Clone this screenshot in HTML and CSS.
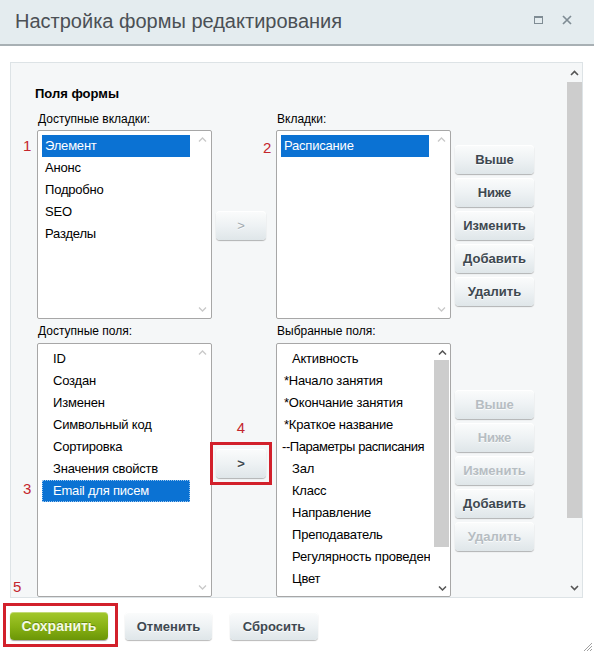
FILE: index.html
```html
<!DOCTYPE html>
<html lang="ru">
<head>
<meta charset="utf-8">
<title>Настройка формы редактирования</title>
<link rel="stylesheet" href="styles.css">
</head>
<body>
<div class="dialog">
  <div class="header">
    <h1 class="title">Настройка формы редактирования</h1>
    <div class="hicons">
      <span class="ic-max"></span>
      <svg class="ic-close" width="10" height="10" viewBox="0 0 10 10"><path d="M1 1L9 9M9 1L1 9" stroke="#7f8c94" stroke-width="1.7" fill="none"/></svg>
    </div>
  </div>

  <div class="panel">
    <div class="content">
      <div class="section-title">Поля формы</div>
      <div class="grid">
        <div class="lbl lbl-first">Доступные вкладки:</div>
        <div></div>
        <div class="lbl lbl-first">Вкладки:</div>
        <div></div>

        <div class="listbox lb-short">
          <span class="num num-1">1</span>
          <div class="items">
            <div class="item sel">Элемент</div>
            <div class="item">Анонс</div>
            <div class="item">Подробно</div>
            <div class="item">SEO</div>
            <div class="item">Разделы</div>
          </div>
          <div class="sb">
            <div class="sb-btn"><svg width="9" height="5" viewBox="0 0 9 5"><path d="M1 4.5L4.5 1L8 4.5" stroke="#c9c9c9" stroke-width="1.3" fill="none"/></svg></div>
            <div class="sb-track"></div>
            <div class="sb-btn"><svg width="9" height="5" viewBox="0 0 9 5"><path d="M1 0.5L4.5 4L8 0.5" stroke="#c9c9c9" stroke-width="1.3" fill="none"/></svg></div>
          </div>
        </div>

        <div class="mid mid-1">
          <button class="btn btn-arrow disabled">&gt;</button>
        </div>

        <div class="listbox lb-short">
          <span class="num num-2">2</span>
          <div class="items">
            <div class="item sel">Расписание</div>
          </div>
          <div class="sb">
            <div class="sb-btn"><svg width="9" height="5" viewBox="0 0 9 5"><path d="M1 4.5L4.5 1L8 4.5" stroke="#c9c9c9" stroke-width="1.3" fill="none"/></svg></div>
            <div class="sb-track"></div>
            <div class="sb-btn"><svg width="9" height="5" viewBox="0 0 9 5"><path d="M1 0.5L4.5 4L8 0.5" stroke="#c9c9c9" stroke-width="1.3" fill="none"/></svg></div>
          </div>
        </div>

        <div class="side side-1">
          <button class="btn btn-side">Выше</button>
          <button class="btn btn-side">Ниже</button>
          <button class="btn btn-side">Изменить</button>
          <button class="btn btn-side">Добавить</button>
          <button class="btn btn-side">Удалить</button>
        </div>

        <div class="lbl">Доступные поля:</div>
        <div></div>
        <div class="lbl">Выбранные поля:</div>
        <div></div>

        <div class="listbox lb-tall">
          <span class="num num-3">3</span>
          <span class="num num-5">5</span>
          <div class="items">
            <div class="item ind">ID</div>
            <div class="item ind">Создан</div>
            <div class="item ind">Изменен</div>
            <div class="item ind">Символьный код</div>
            <div class="item ind">Сортировка</div>
            <div class="item ind">Значения свойств</div>
            <div class="item ind sel focus">Email для писем</div>
          </div>
          <div class="sb">
            <div class="sb-btn"><svg width="9" height="5" viewBox="0 0 9 5"><path d="M1 4.5L4.5 1L8 4.5" stroke="#c9c9c9" stroke-width="1.3" fill="none"/></svg></div>
            <div class="sb-track"></div>
            <div class="sb-btn"><svg width="9" height="5" viewBox="0 0 9 5"><path d="M1 0.5L4.5 4L8 0.5" stroke="#c9c9c9" stroke-width="1.3" fill="none"/></svg></div>
          </div>
        </div>

        <div class="mid mid-2">
          <div class="num-4">4</div>
          <div class="marked marked-arrow">
            <button class="btn btn-arrow">&gt;</button>
          </div>
        </div>

        <div class="listbox lb-tall">
          <div class="items">
            <div class="item ind">Активность</div>
            <div class="item">*Начало занятия</div>
            <div class="item">*Окончание занятия</div>
            <div class="item">*Краткое название</div>
            <div class="item tight">--Параметры расписания</div>
            <div class="item ind">Зал</div>
            <div class="item ind">Класс</div>
            <div class="item ind">Направление</div>
            <div class="item ind">Преподаватель</div>
            <div class="item ind">Регулярность проведения</div>
            <div class="item ind">Цвет</div>
            <div class="item ind">Тип занятия</div>
          </div>
          <div class="sb sb-active">
            <div class="sb-btn"><svg width="9" height="5" viewBox="0 0 9 5"><path d="M1 4.5L4.5 1L8 4.5" stroke="#555" stroke-width="1.5" fill="none"/></svg></div>
            <div class="sb-track"><div class="sb-thumb thumb-list"></div></div>
            <div class="sb-btn"><svg width="9" height="5" viewBox="0 0 9 5"><path d="M1 0.5L4.5 4L8 0.5" stroke="#555" stroke-width="1.5" fill="none"/></svg></div>
          </div>
        </div>

        <div class="side side-2">
          <button class="btn btn-side disabled">Выше</button>
          <button class="btn btn-side disabled">Ниже</button>
          <button class="btn btn-side disabled">Изменить</button>
          <button class="btn btn-side">Добавить</button>
          <button class="btn btn-side disabled">Удалить</button>
        </div>
      </div>
    </div>

    <div class="vscroll">
      <div class="vs-btn"><svg width="9" height="6" viewBox="0 0 9 6"><path d="M1 5L4.5 1.5L8 5" stroke="#555" stroke-width="1.6" fill="none"/></svg></div>
      <div class="vs-track"><div class="sb-thumb thumb-page"></div></div>
      <div class="vs-btn"><svg width="9" height="6" viewBox="0 0 9 6"><path d="M1 1L4.5 4.5L8 1" stroke="#555" stroke-width="1.6" fill="none"/></svg></div>
    </div>
  </div>

  <div class="footer">
    <div class="marked marked-save">
      <button class="btn btn-save">Сохранить</button>
    </div>
    <button class="btn btn-foot btn-cancel">Отменить</button>
    <button class="btn btn-foot btn-reset">Сбросить</button>
  </div>

  <svg class="grip" width="12" height="12" viewBox="0 0 12 12"><path d="M11 3L3 11M11 6L6 11M11 9L9 11" stroke="#a0a0a0" stroke-width="1" fill="none"/></svg>
</div>
</body>
</html>
```

FILE: styles.css
```css
* { box-sizing: border-box; }

html, body {
  margin: 0;
  padding: 0;
}

body {
  width: 594px;
  height: 653px;
  overflow: hidden;
  background: #ffffff;
  font-family: "Liberation Sans", Arial, sans-serif;
  color: #000;
}

.dialog {
  position: relative;
  width: 594px;
  height: 653px;
}

/* Header */
.header {
  height: 46px;
  background: #e4ecef;
  border-bottom: 2px solid #a8b0b4;
  display: flex;
  align-items: center;
  padding-left: 15px;
}

.title {
  flex: 1;
  margin: 0;
  font-size: 20px;
  font-weight: normal;
  color: #4b5055;
  line-height: 24px;
  padding-bottom: 3px;
}

.hicons {
  display: flex;
  align-items: center;
  gap: 19px;
  margin-right: 22px;
  padding-bottom: 4px;
}

.ic-max {
  display: block;
  width: 9px;
  height: 8px;
  border: 1px solid #7f8c94;
  border-top-width: 2px;
}

.ic-close { display: block; }

/* Panel */
.panel {
  margin: 16px 11px 0 10px;
  height: 536px;
  border: 1px solid #dde3e6;
  background: #f5f7f8;
  display: flex;
}

.content {
  flex: 1;
  padding: 23px 0 0 24px;
  overflow: hidden;
}

.section-title {
  font-size: 13px;
  font-weight: bold;
  line-height: 16px;
  color: #000;
}

.grid {
  margin-left: 2px;
  display: grid;
  grid-template-columns: 175px 64px 175px 83px;
}

.lbl {
  font-size: 12px;
  line-height: 14px;
  color: #000;
  padding: 5px 0 5px 1px;
}

.lbl-first {
  margin-top: 5px;
  padding-top: 5px;
  padding-bottom: 4px;
}

/* Listboxes */
.listbox {
  position: relative;
  display: flex;
  background: #fff;
  border: 1px solid #a7a7a7;
  border-radius: 2px;
}

.lb-short { height: 189px; }
.lb-tall { height: 254px; }

.items {
  flex: 1;
  min-width: 0;
  padding: 4px 4px 0 4px;
  overflow: hidden;
}

.item {
  font-size: 13px;
  line-height: 22px;
  height: 22px;
  padding-left: 3px;
  white-space: nowrap;
  overflow: hidden;
  color: #000;
  letter-spacing: -0.2px;
}

.item.ind { padding-left: 11px; }

.item.tight {
  padding-left: 1px;
  letter-spacing: -0.45px;
}

.item.sel {
  background: #0b72d3;
  color: #fff;
}

.item.focus {
  outline: 1px dotted #9cc6ee;
  outline-offset: -1px;
}

.sb {
  width: 17px;
  display: flex;
  flex-direction: column;
}

.sb-active { width: 16px; }

.sb-btn {
  height: 17px;
  display: flex;
  align-items: center;
  justify-content: center;
}

.sb-active .sb-btn { height: 16px; }

.sb-track {
  flex: 1;
  display: flex;
  flex-direction: column;
}

.sb-thumb {
  background: #cdcdcd;
}

.thumb-list {
  height: 187px;
  margin-right: 1px;
}

/* Annotation numbers */
.num {
  position: absolute;
  font-size: 15px;
  line-height: 17px;
  color: #c4262d;
}

.num-1 { left: -15px; top: 6px; }
.num-2 { left: -14px; top: 8px; }
.num-3 { left: -15px; top: 136px; }
.num-5 { left: -25px; top: 234px; }

.num-4 {
  font-size: 15px;
  line-height: 17px;
  color: #c4262d;
  text-align: center;
  width: 50px;
}

/* Middle column */
.mid {
  display: flex;
  flex-direction: column;
  align-items: flex-start;
  padding-left: 4px;
}

.mid-1 { justify-content: center; padding-top: 2px; }
.mid-2 { padding-top: 76px; }

.marked {
  position: relative;
}

.marked-arrow { margin-top: 13px; }

.marked::after {
  content: "";
  position: absolute;
  left: -6px;
  right: -6px;
  top: -7px;
  bottom: -7px;
  border: 3px solid #d2202b;
}

/* Buttons */
.btn {
  display: block;
  border: none;
  border-radius: 4px;
  font-family: "Liberation Sans", Arial, sans-serif;
  font-size: 13px;
  font-weight: bold;
  color: #3e4850;
  text-shadow: 0 1px 0 rgba(255,255,255,0.8);
  background: linear-gradient(to bottom, #fbfcfc 0%, #eef2f4 50%, #dfe6e9 100%);
  box-shadow: 0 1px 1px rgba(0,0,0,0.28), inset 0 1px 0 #fff;
  padding: 0;
  height: 29px;
  cursor: default;
}

.btn.disabled { color: #b6bdc2; }

.btn-arrow {
  width: 50px;
  height: 29px;
  font-size: 13px;
}

.btn-arrow.disabled { font-weight: normal; color: #a3abb0; }

.side {
  display: flex;
  flex-direction: column;
  gap: 4px;
  padding-left: 4px;
}

.side-1 { padding-top: 15px; }
.side-2 { padding-top: 47px; }

.btn-side { width: 79px; }

/* Outer scrollbar */
.vscroll {
  width: 15px;
  display: flex;
  flex-direction: column;
}

.vs-btn {
  height: 19px;
  display: flex;
  align-items: center;
  justify-content: center;
}

.vs-track {
  flex: 1;
  display: flex;
  flex-direction: column;
}

.thumb-page { height: 436px; }

/* Footer */
.footer {
  display: flex;
  align-items: flex-start;
  gap: 17px;
  padding: 14px 0 0 10px;
}

.marked-save::after {
  left: -7px;
  right: -10px;
  top: -9px;
  bottom: -7px;
}

.btn-save {
  width: 98px;
  height: 28px;
  font-size: 14px;
  color: #f4f9e4;
  text-shadow: 0 -1px 0 rgba(60,90,0,0.5);
  background: linear-gradient(to bottom, #a3c82c 0%, #86b013 55%, #6b9607 100%);
  box-shadow: 0 1px 1px rgba(0,0,0,0.35), inset 0 1px 0 rgba(255,255,255,0.35);
}

.btn-foot { height: 28px; }
.btn-cancel { width: 87px; }
.btn-reset { width: 88px; margin-left: 1px; }

.grip {
  position: absolute;
  right: 1px;
  bottom: 1px;
}
```
